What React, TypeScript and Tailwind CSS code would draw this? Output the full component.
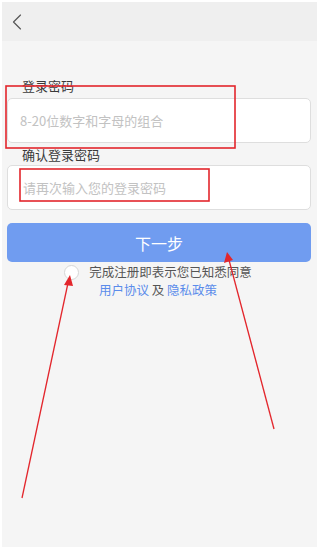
import { ChevronLeft } from "lucide-react";

const font = { fontFamily: '"Noto Sans CJK SC", "Noto Sans", sans-serif' };

export default function App() {
  return (
    <div className="relative w-[320px] h-[549px] bg-white p-[2px] pr-[3px]" style={font}>
      <div className="flex flex-col h-full bg-[#f5f5f5]">
        {/* header */}
        <div className="h-[39px] bg-[#efefef] flex items-center pl-px">
          <ChevronLeft className="w-[28px] h-[28px] text-[#555]" strokeWidth={1} />
        </div>

        <div className="flex flex-col pl-[5px] pr-[6px]">
          <div className="mt-[38px] pl-[15px] text-[13px] leading-[14px] text-[#3a3a3a]">登录密码</div>
          <div className="mt-[5px] h-[45px] bg-white border border-[#dedede] rounded-[5px] flex items-center pl-[12px] text-[13px] text-[#c2c2c2]">
            8-20位数字和字母的组合
          </div>
          <div className="mt-[5px] pl-[15px] text-[13px] leading-[14px] text-[#3a3a3a]">确认登录密码</div>
          <div className="mt-[3px] h-[45px] bg-white border border-[#dedede] rounded-[5px] flex items-center pl-[15px] text-[13px] text-[#c2c2c2]">
            请再次输入您的登录密码
          </div>
          <div className="mt-[13px] h-[39px] bg-[#709cf0] rounded-[5px] flex items-center justify-center text-white text-[16px]">
            下一步
          </div>
          <div className="mt-px flex flex-col items-center text-[12.5px]">
            <div className="flex items-center gap-[10px] mr-[2px]">
              <span className="w-[15px] h-[15px] rounded-full bg-white border border-[#d6d6d6]" />
              <span className="text-[#555] leading-[18px]">完成注册即表示您已知悉同意</span>
            </div>
            <div className="leading-[18px] text-[#555] mr-[2px]">
              <span className="text-[#5b8ceb]">用户协议</span> 及 <span className="text-[#5b8ceb]">隐私政策</span>
            </div>
          </div>
        </div>
      </div>

      {/* annotations */}
      <svg className="absolute inset-0 pointer-events-none" width="320" height="549" viewBox="0 0 320 549">
        <rect x="6" y="86" width="229" height="62" fill="none" stroke="#e3262c" strokeWidth="1.6" />
        <rect x="20" y="169" width="189" height="32" fill="none" stroke="#e3262c" strokeWidth="1.6" />
        <line x1="22" y1="498" x2="68" y2="283" stroke="#e3262c" strokeWidth="1.3" />
        <polygon points="70,275 64,285 73,286" fill="#e3262c" />
        <line x1="274" y1="429" x2="229" y2="260" stroke="#e3262c" strokeWidth="1.3" />
        <polygon points="227,252 224,263 233,260" fill="#e3262c" />
      </svg>
    </div>
  );
}
